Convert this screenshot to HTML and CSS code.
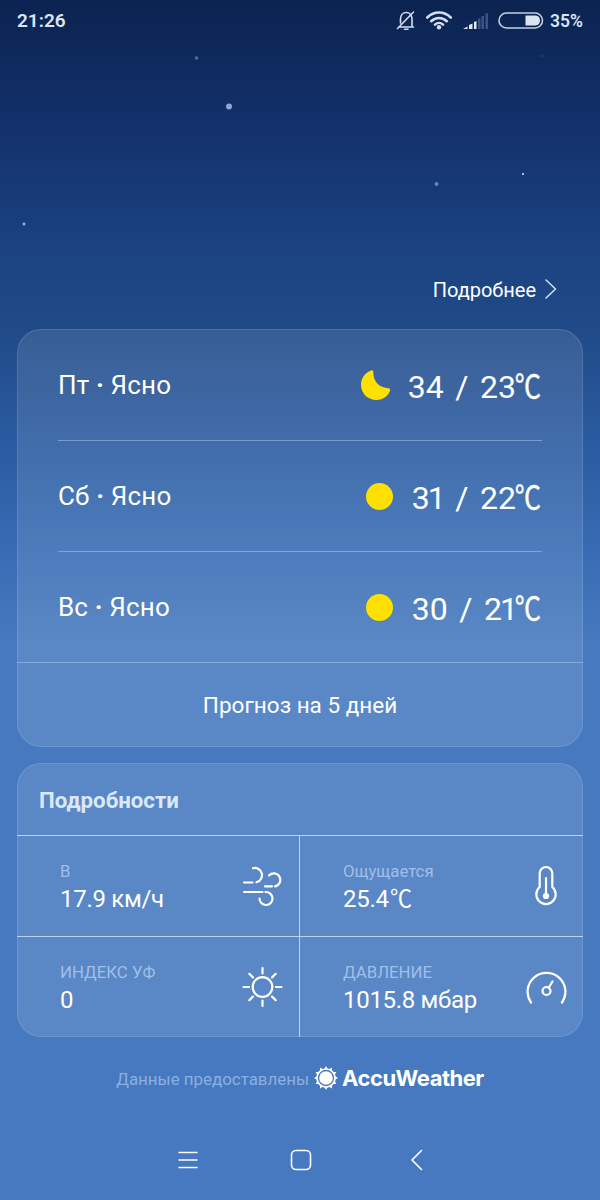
FILE: index.html
```
<!DOCTYPE html>
<html lang="ru">

<head>
    <meta charset="UTF-8">
    <meta name="viewport" content="width=device-width, initial-scale=1.0">
    <title>Погода</title>
    <link rel="stylesheet" href="styles.css">
</head>

<body>
    <!-- звёзды -->
    <svg class="stars" width="600" height="240" viewBox="0 0 600 240">
        <circle cx="196.5" cy="58" r="1.8" fill="#4f6ba3" />
        <circle cx="229" cy="106.5" r="3" fill="#92a5d2" />
        <circle cx="436.5" cy="184" r="2" fill="#5f83bb" />
        <circle cx="523" cy="174" r="1.1" fill="#c9dcf7" />
        <circle cx="24" cy="224" r="1.5" fill="#8db4e8" />
        <circle cx="542" cy="56" r="0.8" fill="#3c5687" />
    </svg>

    <header class="statusBar">
        <span class="time">21:26</span>
        <div class="statusIcons">
            <svg class="bell" width="20" height="22" viewBox="0 0 20 22">
                <path d="M3 17H17.5M4.5 13V9C4.5 5 7 2.5 10.3 2.5S16 5 16 9V17M8.5 19.2H12M1.5 18.5L17.5 2" />
            </svg>
            <svg class="wifi" width="26" height="19" viewBox="0 0 26 19">
                <path d="M1.3 6.5C8 -0.2 18 -0.2 24.7 6.5M5.2 10.2C9.7 5.9 16.3 5.9 20.8 10.2M9 13.6C11.3 11.4 14.7 11.4 17 13.6" />
                <circle cx="13" cy="16.3" r="2.2" />
            </svg>
            <svg class="signal" width="26" height="18" viewBox="0 0 26 18">
                <path d="M0 17L4.5 14.5V17zM6 13L9.5 11.5V17H6zM11 10L13.5 9V17H11z" fill="#e2e9f7" />
                <path d="M15 6.5H17.5V17H15zM18.5 4H21V17H18.5zM22.5 1.5H25V17H22.5z" fill="#3e5484" />
            </svg>
            <svg class="battery" width="46" height="17" viewBox="0 0 46 17">
                <rect x="1" y="1" width="43.5" height="15" rx="7.5" />
                <path d="M27.5 3.5H37.5C43.5 3.5 43.5 13.5 37.5 13.5H27.5z" />
            </svg>
            <span class="percent">35%</span>
        </div>
    </header>

    <main>
        <a class="more">
            <span>Подробнее</span>
            <svg width="12" height="20" viewBox="0 0 12 20">
                <path d="M1 1L10.5 10L1 19" />
            </svg>
        </a>

        <!-- прогноз по дням -->
        <section class="card forecast">
            <div class="day">
                <span class="dayName">Пт <b>·</b> Ясно</span>
                <svg class="moon" width="31" height="32" viewBox="0 0 31 32">
                    <path d="M10.5 1.7C12 1 13.3 1.4 13.3 3C13.3 13 19 18.500 28.5 19.300C30 19.500 30.5 20.800 30 22C27.5 28 22 31 16.5 31C7.8 31 1 24.5 1 15.5C1 9.5 4.8 4 10.5 1.7z" />
                </svg>
                <div class="temp"><span>34</span><span class="slash">/</span><span>23</span><i>℃</i></div>
            </div>
            <div class="day">
                <span class="dayName">Сб <b>·</b> Ясно</span>
                <span class="sun"></span>
                <div class="temp"><span class="narrow">31</span><span class="slash">/</span><span>22</span><i>℃</i></div>
            </div>
            <div class="day">
                <span class="dayName">Вс <b>·</b> Ясно</span>
                <span class="sun"></span>
                <div class="temp"><span>30</span><span class="slash">/</span><span class="narrow">21</span><i>℃</i></div>
            </div>
            <a class="allDays">Прогноз на 5 дней</a>
        </section>

        <!-- подробности -->
        <section class="card details">
            <h2>Подробности</h2>
            <div class="grid">
                <div class="cell">
                    <div>
                        <p class="label">В</p>
                        <p class="value">17.9 км/ч</p>
                    </div>
                    <svg width="42" height="42" viewBox="0 0 42 42">
                        <path d="M3 17.5H11.5M12 3.2A7.2 7.2 0 1 1 15.5 17.3M3 27H21.5M28 10.5A6.5 6.5 0 1 1 34 21.3M24 21.3H31M24.5 27A6.5 6.5 0 1 1 18.5 33.5" />
                    </svg>
                </div>
                <div class="cell">
                    <div>
                        <p class="label">Ощущается</p>
                        <p class="value">25.4<i>℃</i></p>
                    </div>
                    <svg width="42" height="42" viewBox="0 0 42 42">
                        <path d="M14.7 22V8.3A6.3 6.3 0 0 1 27.3 8.3V22A9.7 9.7 0 1 1 14.7 22zM21 13V30" />
                        <circle cx="21" cy="31" r="2" fill="#fff" />
                    </svg>
                </div>
                <div class="cell">
                    <div>
                        <p class="label">ИНДЕКС УФ</p>
                        <p class="value">0</p>
                    </div>
                    <svg width="42" height="42" viewBox="0 0 42 42">
                        <circle cx="21.5" cy="21" r="9.8" />
                        <path d="M21.5 2V7.5M21.5 34.5V40M2.5 21H8M35 21H40.5M8.3 7.8L11.9 11.4M31.1 30.6L34.7 34.2M8.3 34.2L11.9 30.6M31.1 11.4L34.7 7.8" />
                    </svg>
                </div>
                <div class="cell">
                    <div>
                        <p class="label">ДАВЛЕНИЕ</p>
                        <p class="value">1015.8 мбар</p>
                    </div>
                    <svg width="42" height="42" viewBox="0 0 42 42">
                        <path d="M6 36.5A18.9 18.9 0 1 1 37 36.5M23.5 22L27.5 15.5" />
                        <circle cx="21.5" cy="25" r="4" />
                    </svg>
                </div>
            </div>
        </section>
    </main>

    <footer class="provider">
        <span>Данные предоставлены</span>
        <svg width="24" height="24" viewBox="0 0 24 24">
            <circle cx="12" cy="12" r="6.8" fill="#fff" />
            <circle cx="12" cy="12" r="9" fill="none" stroke="#fff" stroke-width="1.7" />
            <path d="M12 0L13.7 3H10.3zM18 1.6L18 5L15 3.3zM22.4 6L20.7 9L19 6zM24 12L21 13.7V10.3zM22.4 18L19 18L20.7 15zM18 22.4L15 20.7L18 19zM12 24L10.3 21H13.7zM6 22.4L6 19L9 20.7zM1.6 18L3.3 15L5 18zM0 12L3 10.3V13.7zM1.6 6L5 6L3.3 9zM6 1.6L9 3.3L6 5z" fill="#fff" />
        </svg>
        <b>AccuWeather</b>
    </footer>

    <nav class="navBar">
        <svg width="20" height="20" viewBox="0 0 20 20">
            <path d="M1 2.5H19M1 10H19M1 17.5H19" />
        </svg>
        <svg width="22" height="22" viewBox="0 0 22 22">
            <rect x="1.5" y="1.5" width="19" height="19" rx="4.5" />
        </svg>
        <svg width="14" height="22" viewBox="0 0 14 22">
            <path d="M11.5 1.5L2 11L11.5 20.5" />
        </svg>
    </nav>
</body>

</html>
```
FILE: styles.css
```
* {
    margin: 0;
    padding: 0;
    box-sizing: border-box;
}

body {
    width: 600px;
    height: 1200px;
    overflow: hidden;
    display: flex;
    flex-direction: column;
    font-family: Roboto, "Noto Sans CJK SC", sans-serif;
    color: #fff;
    background: linear-gradient(#0b2350 0, #12306a 120px, #1b4180 240px, #204a88 330px, #2b5ca2 450px, #376bb3 550px, #4679bf 640px);
}

svg {
    flex: none;
    fill: none;
    stroke-linecap: round;
    stroke-linejoin: round;
}

.stars {
    position: absolute;
    top: 0;
    left: 0;
}

.statusBar {
    height: 41px;
    padding: 0 17px;
    display: flex;
    align-items: center;
    justify-content: space-between;
    color: #dce5f5;
}

.time {
    font-size: 19px;
    font-weight: 600;
}

.statusIcons {
    display: flex;
    align-items: center;
}

.bell {
    stroke: #d5dcf0;
    stroke-width: 1.6;
    margin-right: 10px;
}

.wifi {
    stroke: #d5dcf0;
    stroke-width: 2.6;
    margin-right: 11px;
}

.wifi circle {
    fill: #d5dcf0;
    stroke: none;
}

.signal {
    margin-right: 9px;
}

.battery {
    margin-right: 6px;
}

.battery rect {
    stroke: #c5cee4;
    stroke-width: 1.6;
}

.battery path {
    fill: #dce3f3;
}

.percent {
    font-size: 17.5px;
    font-weight: 600;
}

.more {
    height: 288px;
    padding: 0 43px 30px 0;
    display: flex;
    align-items: flex-end;
    justify-content: flex-end;
    gap: 9px;
    font-size: 20px;
    line-height: 18px;
}

.more svg {
    stroke: #d4e1f5;
    stroke-width: 1.5;
}

.card {
    margin: 0 17px;
    border-radius: 24px;
    background: rgba(255, 255, 255, 0.11);
    box-shadow: inset 0 0 0 1px rgba(255, 255, 255, 0.12);
}

.forecast {
    height: 418px;
    padding-top: 1px;
}

.day {
    height: 111px;
    margin: 0 41px;
    display: flex;
    align-items: center;
    border-bottom: 1px solid rgba(190, 215, 250, 0.45);
}

.day:nth-child(3) {
    margin: 0;
    padding: 0 41px;
}

.dayName {
    flex: 1;
    font-size: 26px;
    letter-spacing: 0.15px;
}

.sun {
    width: 27px;
    height: 27px;
    margin-right: 19px;
    border-radius: 50%;
    background: #ffe100;
}

.moon {
    margin-right: 17px;
    fill: #ffe100;
}

.temp {
    display: flex;
    align-items: baseline;
    padding-right: 1px;
    font-size: 32px;
    line-height: 40px;
}

.temp .slash {
    margin: 0 11.5px;
}

.temp .narrow {
    letter-spacing: -2px;
}

.temp i {
    width: 25px;
    direction: rtl;
    font-family: "Noto Sans CJK SC", sans-serif;
    font-style: normal;
    transform: scaleX(0.82);
    transform-origin: right;
    -webkit-text-stroke: 0.4px #fff;
}

.allDays {
    height: 83px;
    display: flex;
    align-items: center;
    justify-content: center;
    font-size: 22.5px;
}

.details {
    height: 274px;
    margin-top: 16px;
}

.details h2 {
    height: 73px;
    padding-left: 22px;
    font-size: 22.3px;
    line-height: 74px;
    color: #dae8fb;
    border-bottom: 1px solid #bcd3f0;
}

.grid {
    display: grid;
    grid-template-columns: 283px 283px;
    grid-template-rows: 101px 100px;
}

.cell {
    display: flex;
    align-items: center;
    justify-content: space-between;
    padding: 0 16px 0 43px;
}

.cell:nth-child(odd) {
    border-right: 1px solid #bcd3f0;
}

.cell:nth-child(-n+2) {
    border-bottom: 1px solid #bcd3f0;
}

.label {
    padding-top: 1px;
    font-size: 16.8px;
    line-height: 24px;
    color: #a0bfe8;
}

.value {
    font-size: 24px;
    line-height: 32px;
    letter-spacing: -0.3px;
}

.value i {
    display: inline-block;
    margin-left: 1px;
    font: 24px/20px "Noto Sans CJK SC", sans-serif;
    transform: scaleX(0.92);
    transform-origin: left;
}

.cell svg {
    stroke: #fff;
    stroke-width: 2.2;
}

.provider {
    height: 84px;
    display: flex;
    align-items: center;
    justify-content: center;
    font-size: 16.9px;
    color: #8bafe0;
}

.provider svg {
    margin: 0 4px 2px 5px;
}

.provider b {
    padding-bottom: 2px;
    font-family: Inter, sans-serif;
    font-size: 22px;
    letter-spacing: -0.5px;
    color: #fff;
}

.navBar {
    height: 78px;
    display: flex;
    align-items: center;
    padding-left: 178px;
}

.navBar svg {
    stroke: #fff;
    stroke-width: 1.6;
}

.navBar svg:nth-child(2) {
    margin: 0 98px 0 92px;
}
```
